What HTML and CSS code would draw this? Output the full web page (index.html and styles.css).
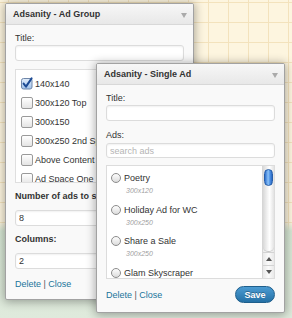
FILE: index.html
```html
<!DOCTYPE html>
<html lang="en">
<head>
    <meta charset="UTF-8">
    <meta name="viewport" content="width=device-width, initial-scale=1.0">
    <link rel="stylesheet" href="styles.css">
    <title>Adsanity widgets</title>
</head>
<body>
    <div class="desktop">

        <!-- ad group widget -->
        <div class="widget group">
            <div class="widget-top">
                <h3>Adsanity - Ad Group</h3>
                <span class="toggle"></span>
            </div>
            <div class="widget-inside">
                <label class="field-label">Title:</label>
                <input class="text-input title-input" type="text">
                <div class="check-list">
                    <div class="check-item">
                        <span class="box is-checked">
                            <svg width="13" height="13" viewBox="0 0 13 13">
                                <defs>
                                    <linearGradient id="chk" x1="0" y1="0" x2="0" y2="1">
                                        <stop offset="0" stop-color="#e3eefb"/>
                                        <stop offset="1" stop-color="#9fc1ea"/>
                                    </linearGradient>
                                </defs>
                                <rect x="0.5" y="1.5" width="10.5" height="10.5" rx="2" fill="url(#chk)" stroke="#6f86a8"/>
                                <path d="M2.6 6.6 L5 9.6 L10.6 1.4" fill="none" stroke="#1d4b94" stroke-width="2" stroke-linecap="round" stroke-linejoin="round"/>
                            </svg>
                        </span>
                        140x140
                    </div>
                    <div class="check-item"><span class="box"></span>300x120 Top</div>
                    <div class="check-item"><span class="box"></span>300x150</div>
                    <div class="check-item"><span class="box"></span>300x250 2nd Spot</div>
                    <div class="check-item"><span class="box"></span>Above Content</div>
                    <div class="check-item"><span class="box"></span>Ad Space One</div>
                </div>
                <p class="field-label strong num-label">Number of ads to show:</p>
                <input class="text-input value-input" type="text" value="8">
                <p class="field-label strong num-label">Columns:</p>
                <input class="text-input value-input" type="text" value="2">
                <div class="widget-control">
                    <span><a href="#">Delete</a> | <a href="#">Close</a></span>
                </div>
            </div>
        </div>

        <!-- single ad widget -->
        <div class="widget single">
            <div class="widget-top">
                <h3>Adsanity - Single Ad</h3>
                <span class="toggle"></span>
            </div>
            <div class="widget-inside">
                <label class="field-label">Title:</label>
                <input class="text-input title-input" type="text">
                <label class="field-label ads-label">Ads:</label>
                <input class="text-input search-input" type="text" placeholder="search ads">
                <div class="ad-list">
                    <div class="ad-items">
                        <div class="ad-item">
                            <span class="radio"></span>
                            <div>
                                <div class="ad-name">Poetry</div>
                                <div class="ad-size">300x120</div>
                            </div>
                        </div>
                        <div class="ad-item">
                            <span class="radio"></span>
                            <div>
                                <div class="ad-name">Holiday Ad for WC</div>
                                <div class="ad-size">300x250</div>
                            </div>
                        </div>
                        <div class="ad-item">
                            <span class="radio"></span>
                            <div>
                                <div class="ad-name">Share a Sale</div>
                                <div class="ad-size">300x250</div>
                            </div>
                        </div>
                        <div class="ad-item">
                            <span class="radio"></span>
                            <div>
                                <div class="ad-name">Glam Skyscraper</div>
                            </div>
                        </div>
                    </div>
                    <div class="scrollbar">
                        <div class="track"><div class="thumb"></div></div>
                        <div class="arrow"><span class="up"></span></div>
                        <div class="arrow"><span class="down"></span></div>
                    </div>
                </div>
                <div class="widget-control">
                    <span><a href="#">Delete</a> | <a href="#">Close</a></span>
                    <button class="save-btn">Save</button>
                </div>
            </div>
        </div>

    </div>
</body>
</html>
```

FILE: styles.css
```css
body{
    margin: 0;
    width: 292px;
    height: 318px;
    overflow: hidden;
    font-family: "Liberation Sans", Arial, sans-serif;
    color: #333;
    background-color: #fdf5df;
    background-image:
        linear-gradient(180deg, rgba(214,230,211,0) 222px, #d6e6d3 231px, #dfeadc 318px),
        linear-gradient(90deg, #f3e2bc 1px, transparent 1px),
        linear-gradient(180deg, #f3e2bc 1px, transparent 1px);
    background-size: 100% 100%, 20px 20px, 20px 20px;
    background-position: 0 0, 8px 0, 0 2px;
}
.desktop{
    position: relative;
    width: 292px;
    height: 318px;
}

/* widget windows */
.widget{
    position: absolute;
    width: 187px;
    border: 1px solid #a2a2a2;
    border-radius: 2px;
    background: #f9f9f9;
    box-shadow: 0 1px 10px 1px rgba(0,0,0,0.32);
    overflow: hidden;
}
.group{
    left: 5px;
    top: 3px;
    height: 295px;
}
.single{
    left: 96px;
    top: 63px;
    height: 248px;
}
.widget-top{
    height: 20px;
    padding: 0 6px 0 7px;
    display: flex;
    align-items: center;
    justify-content: space-between;
    background: linear-gradient(#f7f7f7, #e8e8e8);
    border-bottom: 1px solid #d8d8d8;
}
.widget-top h3{
    margin: 0;
    font-size: 9px;
    font-weight: bold;
    color: #333;
}
.toggle{
    width: 0;
    height: 0;
    margin-top: 2px;
    border-left: 3px solid transparent;
    border-right: 3px solid transparent;
    border-top: 5px solid #aaa;
}
.widget-inside{
    padding: 7px 9px 0;
}

/* form bits */
.field-label{
    display: block;
    margin: 0;
    font-size: 9px;
    line-height: 12px;
    color: #333;
}
.strong{
    font-weight: bold;
    white-space: nowrap;
}
.num-label{
    margin-top: 7px;
}
.text-input{
    display: block;
    width: 100%;
    height: 16px;
    box-sizing: border-box;
    margin: 0;
    padding: 0 3px;
    border: 1px solid #dcdcdc;
    border-radius: 3px;
    background: #fff;
    box-shadow: inset 0 1px 2px rgba(0,0,0,0.06);
    font-family: "Liberation Sans", Arial, sans-serif;
    font-size: 9px;
    color: #333;
}
.text-input::placeholder{
    color: #b5b5b5;
}
.title-input{
    margin-top: 1px;
}
.value-input{
    margin-top: 8px;
}
.ads-label{
    margin-top: 8px;
}
.search-input{
    margin-top: 2px;
    height: 15px;
}

/* ad group checklist */
.check-list{
    margin-top: 8px;
    height: 114px;
    box-sizing: border-box;
    padding: 4px 5px 0;
    border: 1px solid #dfdfdf;
    background: #fff;
    overflow: hidden;
}
.check-item{
    display: flex;
    align-items: center;
    gap: 2px;
    height: 19px;
    font-size: 9px;
    white-space: nowrap;
    color: #333;
}
.box{
    width: 10px;
    height: 10px;
    flex: none;
    border: 1px solid #9a9a9a;
    border-radius: 2px;
    background: linear-gradient(#fff, #e4e4e4);
    position: relative;
}
.box.is-checked{
    border: none;
    width: 12px;
    height: 12px;
    background: none;
}
.box svg{
    position: absolute;
    left: 0;
    top: -1px;
}

/* single ad radio list */
.ad-list{
    margin-top: 7px;
    height: 114px;
    box-sizing: border-box;
    border: 1px solid #dcdcdc;
    background: #fff;
    display: flex;
    overflow: hidden;
}
.ad-items{
    flex: 1;
    padding-left: 4px;
    overflow: hidden;
}
.ad-item{
    display: flex;
    align-items: flex-start;
    gap: 3px;
    height: 31.5px;
    padding-top: 6px;
    box-sizing: border-box;
}
.radio{
    width: 8px;
    height: 8px;
    flex: none;
    margin-top: 1px;
    border: 1px solid #8c8c8c;
    border-radius: 50%;
    background: linear-gradient(#fdfdfd, #dcdcdc);
}
.ad-name{
    font-size: 9px;
    line-height: 12px;
    color: #333;
    white-space: nowrap;
}
.ad-size{
    margin: 2px 0 0 2px;
    font-size: 7px;
    line-height: 9px;
    font-style: italic;
    color: #a0a0a0;
}
.scrollbar{
    width: 11px;
    flex: none;
    display: flex;
    flex-direction: column;
    border-left: 1px solid #d6d6d6;
    background: linear-gradient(90deg, #e9e9e9, #fbfbfb 50%, #e9e9e9);
}
.track{
    flex: 1;
    padding-top: 3px;
    border-radius: 0 0 5px 5px;
    background: linear-gradient(90deg, #d8d8d8, #f6f6f6 45%, #fff 60%, #e2e2e2);
    border-bottom: 1px solid #c9c9c9;
}
.thumb{
    height: 15px;
    margin: 0 1px;
    border: 1px solid #275ea8;
    border-radius: 5px;
    background: linear-gradient(90deg, #2d6fcf, #8cc2f7 45%, #4f93e6 70%, #2a67c2);
}
.arrow{
    height: 12px;
    display: flex;
    align-items: center;
    justify-content: center;
    border-top: 1px solid #d3d3d3;
}
.up, .down{
    width: 0;
    height: 0;
    border-left: 3px solid transparent;
    border-right: 3px solid transparent;
}
.up{
    border-bottom: 4px solid #555;
}
.down{
    border-top: 4px solid #555;
}

/* footer */
.widget-control{
    margin-top: 9px;
    display: flex;
    align-items: center;
    justify-content: space-between;
    font-size: 9px;
    line-height: 12px;
    color: #555;
}
.single .widget-control{
    margin-top: 7px;
}
.widget-control a{
    color: #21759b;
    text-decoration: none;
}
.save-btn{
    width: 40px;
    height: 17px;
    padding: 0;
    border: 1px solid #1f5f8c;
    border-radius: 9px;
    background: linear-gradient(#4b9bd2, #2571a6);
    color: #fff;
    font-family: "Liberation Sans", Arial, sans-serif;
    font-size: 9px;
    font-weight: bold;
    text-shadow: 0 -1px 0 rgba(0,0,0,0.3);
    cursor: pointer;
}
```
